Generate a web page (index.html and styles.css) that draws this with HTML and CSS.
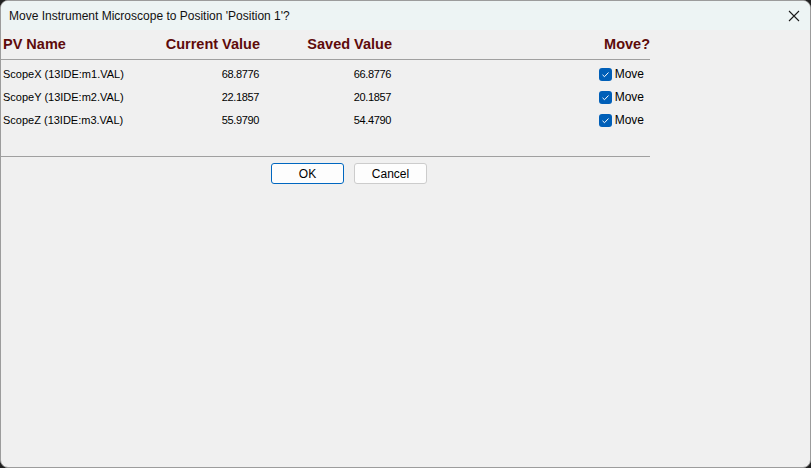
FILE: index.html
```html
<!DOCTYPE html>
<html>
<head>
<meta charset="utf-8">
<link rel="stylesheet" href="styles.css">
</head>
<body>
<div class="window">
  <div class="titlebar">
    <span class="title">Move Instrument Microscope to Position 'Position 1'?</span>
    <svg class="close" width="12" height="12" viewBox="0 0 12 12"><path d="M1 1L11 11M11 1L1 11" stroke="#1a1a1a" stroke-width="1.1" fill="none"/></svg>
  </div>
  <div class="content">
    <div class="table">
      <div class="head name">PV Name</div>
      <div class="head num">Current Value</div>
      <div class="head num">Saved Value</div>
      <div class="head move">Move?</div>
    </div>
    <div class="rows">
      <div class="table row">
        <div class="name">ScopeX (13IDE:m1.VAL)</div>
        <div class="num">68.8776</div>
        <div class="num">66.8776</div>
        <div class="move"><span class="check"><svg width="13" height="13" viewBox="0 0 13 13"><path d="M3.5 6.8L5.5 8.7L9.5 4.5" stroke="#fff" stroke-width="1" fill="none"/></svg></span>Move</div>
      </div>
      <div class="table row">
        <div class="name">ScopeY (13IDE:m2.VAL)</div>
        <div class="num">22.1857</div>
        <div class="num">20.1857</div>
        <div class="move"><span class="check"><svg width="13" height="13" viewBox="0 0 13 13"><path d="M3.5 6.8L5.5 8.7L9.5 4.5" stroke="#fff" stroke-width="1" fill="none"/></svg></span>Move</div>
      </div>
      <div class="table row">
        <div class="name">ScopeZ (13IDE:m3.VAL)</div>
        <div class="num">55.9790</div>
        <div class="num">54.4790</div>
        <div class="move"><span class="check"><svg width="13" height="13" viewBox="0 0 13 13"><path d="M3.5 6.8L5.5 8.7L9.5 4.5" stroke="#fff" stroke-width="1" fill="none"/></svg></span>Move</div>
      </div>
    </div>
    <div class="buttons">
      <button class="btn default">OK</button>
      <button class="btn">Cancel</button>
    </div>
  </div>
</div>
</body>
</html>
```

FILE: styles.css
```css
html, body {
  margin: 0;
  padding: 0;
  width: 811px;
  height: 468px;
  background: #202020;
  overflow: hidden;
}
.window {
  width: 811px;
  height: 468px;
  box-sizing: border-box;
  border: 1px solid #9c9c9c;
  border-radius: 8px;
  background: #f0f0f0;
  overflow: hidden;
  font-family: "Liberation Sans", Arial, sans-serif;
  font-size: 12px;
  color: #000;
  display: flex;
  flex-direction: column;
}
.titlebar {
  height: 29px;
  background: #edf4f4;
  display: flex;
  align-items: center;
  padding-left: 8px;
  padding-right: 10px;
  flex-shrink: 0;
}
.title {
  flex: 1;
  font-size: 12px;
  color: #111;
  padding-top: 1px;
}
.close {
  display: block;
  margin-top: 1px;
}
.content {
  width: 649px;
}
.table {
  display: grid;
  grid-template-columns: 157px 100px 132px 258px;
  padding-left: 2px;
}
.head {
  font-weight: bold;
  font-size: 14.5px;
  color: #5e0b0b;
  height: 29px;
  line-height: 29px;
  border-bottom: 1px solid #a0a0a0;
}
.table > .head:first-child {
  margin-left: -2px;
  padding-left: 2px;
}
.num { text-align: right; }
.move {
  text-align: right;
  display: flex;
  justify-content: flex-end;
  align-items: center;
}
.head.move { display: block; }
.rows {
  padding-top: 3px;
  padding-bottom: 24px;
  border-bottom: 1px solid #a0a0a0;
}
.row > div {
  height: 23px;
  line-height: 23px;
  font-size: 11px;
}
.row > .num {
  letter-spacing: -0.35px;
  padding-right: 1px;
}
.row .move {
  padding-right: 6px;
  font-size: 12px;
}
.check {
  width: 13px;
  height: 13px;
  border-radius: 3px;
  background: #005fb8;
  display: inline-block;
  margin-right: 3px;
}
.check svg { display: block; }
.buttons {
  display: flex;
  gap: 10px;
  padding-left: 270px;
  padding-top: 6px;
}
.btn {
  width: 73px;
  height: 21px;
  box-sizing: border-box;
  background: #fdfdfd;
  border: 1px solid #cccccc;
  border-radius: 3px;
  font-family: "Liberation Sans", Arial, sans-serif;
  font-size: 12px;
  color: #000;
  padding: 0;
}
.btn.default {
  border-color: #0067c0;
}
```
